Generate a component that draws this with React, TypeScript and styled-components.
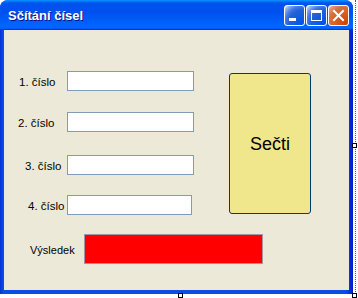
import styled, { createGlobalStyle } from "styled-components";

const GlobalStyle = createGlobalStyle`
    html, body {
        margin: 0;
        padding: 0;
        background: #fff;
    }
    * {
        box-sizing: border-box;
    }
`;

const Surface = styled.div`
    position: relative;
    width: 356px;
    height: 298px;
    border-right: 1px dotted #555;
`;

const Window = styled.div`
    display: flex;
    flex-direction: column;
    width: 353px;
    height: 294px;
    background: linear-gradient(to right, #0831d9 0%, #0a4ee6 1%, #0a4ee6 98%, #0019cf 100%);
    border-radius: 8px 8px 0 0;
    overflow: hidden;
`;

const TitleBar = styled.div`
    display: flex;
    align-items: center;
    height: 30px;
    padding: 0 4px 0 8px;
    background: linear-gradient(
        to bottom,
        #0997ff 0%,
        #0053ee 10%,
        #0050ee 40%,
        #0066ff 86%,
        #0066ff 92%,
        #005bff 95%,
        #003dd7 97%,
        #003dd7 100%
    );
`;

const Title = styled.span`
    flex: 1;
    color: #fff;
    font-family: "Liberation Sans", Arial, sans-serif;
    font-weight: bold;
    font-size: 13px;
    text-shadow: 1px 1px #0f1089;
    padding-top: 1px;
`;

const Controls = styled.div`
    display: flex;
    gap: 1px;
`;

const CtlButton = styled.div<{ $close?: boolean }>`
    display: flex;
    align-items: center;
    justify-content: center;
    width: 21px;
    height: 21px;
    border: 1px solid #fff;
    border-radius: 3px;
    background: ${(p) =>
        p.$close
            ? "radial-gradient(circle at 90% 90%, #cc4600 0%, #dc6527 55%, #cd7546 70%, #ee987e 90%, #fff 100%)"
            : "radial-gradient(circle at 90% 90%, #0054e9 0%, #2263d5 55%, #4479e4 70%, #a3bbec 90%, #fff 100%)"};
`;

const Body = styled.div`
    flex: 1;
    margin: 0 4px 4px 4px;
    background: #ece9d8;
    padding-top: 41px;
    font-family: "Liberation Sans", Arial, sans-serif;
    font-size: 11px;
    color: #000;
`;

const Top = styled.div`
    display: flex;
    align-items: flex-start;
`;

const Fields = styled.div`
    display: flex;
    flex-direction: column;
    width: 190px;
`;

const Row = styled.div<{ $gap: number }>`
    display: grid;
    grid-template-columns: 63px auto;
    height: 20px;
    margin-top: ${(p) => p.$gap}px;
`;

const Label = styled.span<{ $indent: number }>`
    padding-left: ${(p) => p.$indent}px;
    padding-top: 4px;
    line-height: 14px;
    font-size: 11.5px;
    white-space: nowrap;
`;

const TextBox = styled.div<{ $width: number }>`
    width: ${(p) => p.$width}px;
    height: 20px;
    background: #fff;
    border: 1px solid #7f9db9;
`;

const AddButton = styled.div`
    display: flex;
    align-items: center;
    justify-content: center;
    width: 82px;
    height: 141px;
    margin: 2px 0 0 35px;
    background: #f0e68c;
    border: 1px solid #003c74;
    border-radius: 3px;
    font-size: 18px;
    padding-top: 1px;
`;

const Result = styled.div`
    display: flex;
    align-items: center;
    margin-top: 19px;
    padding-left: 26px;
`;

const ResultLabel = styled.span`
    width: 54px;
    padding-top: 2px;
`;

const ResultBox = styled.div`
    width: 179px;
    height: 30px;
    background: #ff0000;
    border: 1px solid #a595a4;
`;

const Handle = styled.div<{ $x: number; $y: number }>`
    position: absolute;
    left: ${(p) => p.$x}px;
    top: ${(p) => p.$y}px;
    width: 5px;
    height: 5px;
    background: #fff;
    border: 1px solid #000;
`;

const fields = [
    { label: "1. číslo", indent: 15, gap: 0, width: 127 },
    { label: "2. číslo", indent: 14, gap: 21, width: 127 },
    { label: "3. číslo", indent: 21, gap: 23, width: 127 },
    { label: "4. číslo", indent: 24, gap: 20, width: 125 },
];

function App() {
    return (
        <Surface>
            <GlobalStyle />
            <Window>
                <TitleBar>
                    <Title>Sčítání čísel</Title>
                    <Controls>
                        <CtlButton>
                            <svg width="19" height="19" viewBox="0 0 19 19">
                                <rect x="4" y="12" width="7" height="3" fill="#fff" />
                            </svg>
                        </CtlButton>
                        <CtlButton>
                            <svg width="19" height="19" viewBox="0 0 19 19">
                                <rect x="4.5" y="4.5" width="10" height="10" fill="none" stroke="#fff" strokeWidth="1" />
                                <rect x="4" y="4" width="11" height="3" fill="#fff" />
                            </svg>
                        </CtlButton>
                        <CtlButton $close>
                            <svg width="19" height="19" viewBox="0 0 19 19">
                                <path d="M5 5 L14 14 M14 5 L5 14" stroke="#fff" strokeWidth="2" strokeLinecap="square" />
                            </svg>
                        </CtlButton>
                    </Controls>
                </TitleBar>
                <Body>
                    <Top>
                        <Fields>
                            {fields.map((f) => (
                                <Row key={f.label} $gap={f.gap}>
                                    <Label $indent={f.indent}>{f.label}</Label>
                                    <TextBox $width={f.width} />
                                </Row>
                            ))}
                        </Fields>
                        <AddButton>Sečti</AddButton>
                    </Top>
                    <Result>
                        <ResultLabel>Výsledek</ResultLabel>
                        <ResultBox />
                    </Result>
                </Body>
            </Window>
            <Handle $x={352} $y={143} />
            <Handle $x={178} $y={293} />
            <Handle $x={352} $y={293} />
        </Surface>
    );
}

export default App;
